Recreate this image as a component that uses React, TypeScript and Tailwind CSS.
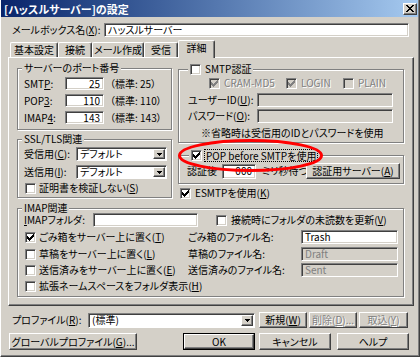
import React from "react";

const sunken =
  "border border-t-[#808080] border-l-[#808080] border-r-white border-b-white shadow-[inset_1px_1px_0_#404040,inset_-1px_-1px_0_#d4d0c8]";
const raised =
  "border border-t-white border-l-white border-r-[#404040] border-b-[#404040] shadow-[inset_-1px_-1px_0_#808080]";
const dim = "text-[#808080] [text-shadow:1px_1px_0_#fff]";

// 7x7 windows check mark, drawn pixel by pixel
const CHECK = ["......x", ".....xx", "x...xxx", "xx.xxx.", "xxxxx..", ".xxx...", "..x...."];
const checkPath = CHECK.flatMap((row, y) =>
  row.split("").map((c, x) => (c === "x" ? `M${x} ${y}h1v1h-1z` : ""))
).join("");

function U({ children }: { children: React.ReactNode }) {
  return <span className="underline underline-offset-[1px]">{children}</span>;
}

function Check({ on = false, off = false }: { on?: boolean; off?: boolean }) {
  return (
    <span
      className={`inline-flex w-[11px] h-[11px] shrink-0 items-center justify-center ${sunken} ${
        off ? "bg-[#d4d0c8]" : "bg-white"
      }`}
    >
      {on && (
        <svg width="7" height="7" viewBox="0 0 7 7" shapeRendering="crispEdges">
          <path d={checkPath} fill={off ? "#808080" : "#000"} />
        </svg>
      )}
    </span>
  );
}

function Field({
  className = "",
  children,
  off = false,
  right = false,
}: {
  className?: string;
  children?: React.ReactNode;
  off?: boolean;
  right?: boolean;
}) {
  return (
    <div
      className={`flex items-center overflow-hidden whitespace-nowrap px-[3px] ${sunken} ${
        off ? "bg-[#d4d0c8] text-[#808080]" : "bg-white"
      } ${right ? "justify-end" : ""} ${className}`}
    >
      {children}
    </div>
  );
}

function Combo({ className = "", children }: { className?: string; children: React.ReactNode }) {
  return (
    <div
      className={`flex items-stretch p-[1px] border border-t-[#808080] border-l-[#808080] border-r-white border-b-white shadow-[inset_1px_1px_0_#404040] bg-white ${className}`}
    >
      <div className="flex-1 flex items-center px-[2px] whitespace-nowrap">{children}</div>
      <div className={`w-[12px] flex items-center justify-center bg-[#d4d0c8] ${raised}`}>
        <svg width="5" height="3" viewBox="0 0 5 3" shapeRendering="crispEdges">
          <path d="M0 0h5v1h-1v1h-1v1h-1v-1h-1v-1h-1z" fill="#000" />
        </svg>
      </div>
    </div>
  );
}

function Btn({
  className = "",
  children,
  off = false,
}: {
  className?: string;
  children: React.ReactNode;
  off?: boolean;
}) {
  return (
    <div
      className={`flex items-center justify-center whitespace-nowrap bg-[#d4d0c8] ${raised} ${
        off ? dim : ""
      } ${className}`}
    >
      {children}
    </div>
  );
}

function Group({
  title,
  className = "",
  titleClass = "ml-[4px] h-[12px]",
  children,
}: {
  title: React.ReactNode;
  className?: string;
  titleClass?: string;
  children?: React.ReactNode;
}) {
  return (
    <div
      className={`flex flex-col border border-[#808080] shadow-[inset_1px_1px_0_#fff,1px_1px_0_#fff] ${className}`}
    >
      <div
        className={`-mt-[7px] self-start flex items-center gap-[4px] px-[2px] bg-[#d4d0c8] whitespace-nowrap ${titleClass}`}
      >
        {title}
      </div>
      {children}
    </div>
  );
}

function Tab({ className = "", children }: { className?: string; children: React.ReactNode }) {
  return (
    <div
      className={`flex items-center justify-center rounded-t-[2px] border-t border-l border-t-white border-l-white border-r border-r-[#404040] shadow-[inset_-1px_0_0_#808080] bg-[#d4d0c8] ${className}`}
    >
      {children}
    </div>
  );
}

function PortRow({ label, value, std }: { label: React.ReactNode; value: string; std: string }) {
  return (
    <div className="flex items-center h-[13px] pl-[6px]">
      <span className="w-[41px]">{label}</span>
      <Field right className="w-[39px] h-[13px]">
        {value}
      </Field>
      <span className="ml-[6px]">（標準: {std}）</span>
    </div>
  );
}

function ImapRow({
  on = false,
  text,
  label,
  value,
  off = false,
  className = "",
}: {
  on?: boolean;
  text: React.ReactNode;
  label: string;
  value: string;
  off?: boolean;
  className?: string;
}) {
  return (
    <div className={`flex items-center h-[14px] pl-[7px] ${className}`}>
      <div className="w-[163px] flex items-center gap-[3px] whitespace-nowrap">
        <Check on={on} />
        <span>{text}</span>
      </div>
      <span className="w-[113px]">{label}</span>
      <Field off={off} className="w-[97px] h-[14px]">
        {value}
      </Field>
    </div>
  );
}

export default function App() {
  return (
    <div className="relative w-[420px] h-[357px] overflow-hidden bg-[#d4d0c8] text-black text-[10px] leading-[12px] font-['Noto_Sans_CJK_JP',sans-serif] [font-feature-settings:'palt'] border-l border-l-white border-r border-b border-r-[#404040] border-b-[#404040]">
      <div className="h-full flex flex-col border-r border-b border-r-[#808080] border-b-[#808080]">
        {/* title bar */}
        <div className="h-[17px] shrink-0 flex items-center pl-[3px] pr-[1px] bg-linear-to-r from-[#0a246a] to-[#a6caf0]">
          <span className="text-white font-bold text-[11px]">[ハッスルサーバー]の設定</span>
          <div className={`ml-auto w-[14px] h-[12px] flex items-center justify-center bg-[#d4d0c8] ${raised}`}>
            <svg width="8" height="7" viewBox="0 0 8 7" shapeRendering="crispEdges">
              <path
                d="M0 0h2v1h1v1h2v-1h1v-1h2v1h-1v1h-1v1h-1v1h1v1h1v1h1v1h-2v-1h-1v-1h-2v1h-1v1h-2v-1h1v-1h1v-1h1v-1h-1v-1h-1v-1h-1z"
                fill="#000"
              />
            </svg>
          </div>
        </div>

        {/* mailbox name */}
        <div className="flex items-center h-[14px] mt-[6px] pl-[11px]">
          <span className="w-[92px] whitespace-nowrap">
            メールボックス名(<U>X</U>):
          </span>
          <Field className="w-[305px] h-[14px]">ハッスルサーバー</Field>
        </div>

        {/* tabs */}
        <div className="relative z-10 flex items-start h-[18px] -mb-[1px] mt-[3px] ml-[7px]">
          <Tab className="mt-[2px] h-[15px] w-[48px] ml-[2px]">基本設定</Tab>
          <Tab className="mt-[2px] h-[15px] w-[34px]">接続</Tab>
          <Tab className="mt-[2px] h-[15px] w-[52px]">メール作成</Tab>
          <Tab className="mt-[2px] h-[15px] w-[34px]">受信</Tab>
          <Tab className="h-[18px] w-[37px] pb-[3px]">詳細</Tab>
        </div>

        {/* tab panel */}
        <div className="ml-[7px] w-[406px] h-[249px] shrink-0 flex flex-col pl-[8px] border border-t-white border-l-white border-r-[#404040] border-b-[#404040] shadow-[inset_-1px_-1px_0_#808080]">
          <div className="flex gap-[6px] h-[141px]">
            {/* left column */}
            <div className="w-[155px] flex flex-col">
              <Group title="サーバーのポート番号" className="mt-[10px] h-[62px]">
                <div className="mt-[3px] flex flex-col gap-[4px]">
                  <PortRow label={<>SMT<U>P</U>:</>} value="25" std="25" />
                  <PortRow label={<>POP<U>3</U>:</>} value="110" std="110" />
                  <PortRow label={<>IMAP<U>4</U>:</>} value="143" std="143" />
                </div>
              </Group>
              <Group title="SSL/TLS関連" className="mt-[9px] h-[59px]">
                <div className="mt-[2px] flex items-center h-[14px] pl-[6px]">
                  <span className="w-[52px]">
                    受信用(<U>C</U>):
                  </span>
                  <Combo className="w-[91px] h-[14px]">デフォルト</Combo>
                </div>
                <div className="mt-[4px] flex items-center h-[14px] pl-[6px]">
                  <span className="w-[52px]">
                    送信用(<U>I</U>):
                  </span>
                  <Combo className="w-[91px] h-[14px]">デフォルト</Combo>
                </div>
                <div className="mt-[3px] flex items-center gap-[3px] h-[12px] pl-[7px]">
                  <Check />
                  <span>
                    証明書を検証しない(<U>S</U>)
                  </span>
                </div>
              </Group>
            </div>

            {/* right column */}
            <div className="w-[226px] flex flex-col">
              <Group
                className="mt-[11px] h-[74px]"
                titleClass="ml-[9px] h-[12px]"
                title={
                  <>
                    <Check />
                    <span>SMTP認証</span>
                  </>
                }
              >
                <div className="mt-[2px] flex items-center h-[12px] pl-[30px]">
                  <div className="w-[77px] flex items-center gap-[4px]">
                    <Check on off />
                    <span className={dim}>CRAM-MD5</span>
                  </div>
                  <div className="w-[57px] flex items-center gap-[4px]">
                    <Check on off />
                    <span className={dim}>LOGIN</span>
                  </div>
                  <div className="flex items-center gap-[4px]">
                    <Check off />
                    <span className={dim}>PLAIN</span>
                  </div>
                </div>
                <div className="mt-[4px] flex items-center h-[14px] pl-[9px]">
                  <span className="w-[69px]">
                    ユーザーID(<U>U</U>):
                  </span>
                  <Field off className="w-[136px] h-[14px]" />
                </div>
                <div className="mt-[2px] flex items-center h-[14px] pl-[9px]">
                  <span className="w-[69px]">
                    パスワード(<U>O</U>):
                  </span>
                  <Field off className="w-[136px] h-[14px]" />
                </div>
                <div className="mt-[4px] h-[12px] pl-[22px] whitespace-nowrap">
                  ※省略時は受信用のIDとパスワードを使用
                </div>
              </Group>

              <Group
                className="mt-[12px] h-[29px]"
                titleClass="ml-[10px] h-[12px]"
                title={
                  <>
                    <Check on />
                    <span className="-ml-[2px] px-[1px] border border-dotted border-black leading-[11px]">
                      POP before SMTPを使用
                    </span>
                  </>
                }
              >
                <div className="mt-[2px] flex items-center h-[16px] pl-[8px] whitespace-nowrap">
                  <span className="w-[35px]">認証後</span>
                  <Field right className="w-[34px] h-[15px]">
                    000
                  </Field>
                  <span className="ml-[6px] w-[44px]">ミリ秒待つ</span>
                  <Btn className="w-[94px] h-[16px]">
                    認証用サーバー(<U>A</U>)
                  </Btn>
                </div>
              </Group>

              <div className="mt-[3px] flex items-center gap-[4px] h-[12px] pl-[2px]">
                <Check on />
                <span>
                  ESMTPを使用(<U>K</U>)
                </span>
              </div>
            </div>
          </div>

          {/* IMAP */}
          <Group
            title="IMAP関連"
            titleClass="ml-[4px] h-[11px] leading-[11px]"
            className="mt-[9px] w-[387px] h-[89px]"
          >
            <div className="flex items-center h-[14px] pl-[6px]">
              <span className="w-[69px]">
                <U>I</U>MAPフォルダ:
              </span>
              <Field className="w-[105px] h-[14px]" />
              <div className="ml-[18px] flex items-center gap-[4px] whitespace-nowrap">
                <Check />
                <span>
                  接続時にフォルダの未読数を更新(<U>V</U>)
                </span>
              </div>
            </div>
            <ImapRow
              className="mt-[3px]"
              on
              text={<>ごみ箱をサーバー上に置く(<U>T</U>)</>}
              label="ごみ箱のファイル名:"
              value="Trash"
            />
            <ImapRow
              className="mt-[3px]"
              off
              text={<>草稿をサーバー上に置く(<U>L</U>)</>}
              label="草稿のファイル名:"
              value="Draft"
            />
            <ImapRow
              className="mt-[2px]"
              off
              text={<>送信済みをサーバー上に置く(<U>E</U>)</>}
              label="送信済みのファイル名:"
              value="Sent"
            />
            <div className="mt-[2px] flex items-center gap-[3px] h-[14px] pl-[7px] whitespace-nowrap">
              <Check />
              <span>
                拡張ネームスペースをフォルダ表示(<U>H</U>)
              </span>
            </div>
          </Group>
        </div>

        {/* profile row */}
        <div className="mt-[6px] flex items-center h-[16px] pl-[11px]">
          <span className="w-[76px] whitespace-nowrap">
            プロファイル(<U>R</U>):
          </span>
          <Combo className="w-[167px] h-[15px]">(標準)</Combo>
          <Btn className="ml-[4px] w-[48px] h-[16px]">
            新規(<U>W</U>)
          </Btn>
          <Btn off className="ml-[2px] w-[48px] h-[16px]">
            削除(<U>D</U>)...
          </Btn>
          <Btn off className="ml-[2px] w-[49px] h-[16px]">
            取込(<U>Y</U>)
          </Btn>
        </div>

        {/* bottom buttons */}
        <div className="mt-[5px] flex items-center h-[17px] pl-[8px]">
          <Btn className="w-[128px] h-[17px]">
            グローバルプロファイル(<U>G</U>)...
          </Btn>
          <div className="ml-[46px] w-[72px] h-[17px] border border-black flex">
            <Btn className="flex-1">OK</Btn>
          </div>
          <Btn className="ml-[4px] w-[72px] h-[17px]">キャンセル</Btn>
          <Btn className="ml-[6px] w-[72px] h-[17px]">ヘルプ</Btn>
        </div>
      </div>

      {/* red marker drawn over the dialog */}
      <svg className="absolute left-0 top-0 pointer-events-none" width="420" height="357">
        <ellipse cx="249.5" cy="155.5" rx="71" ry="15" fill="none" stroke="#ff0000" strokeWidth="3" />
      </svg>
    </div>
  );
}
